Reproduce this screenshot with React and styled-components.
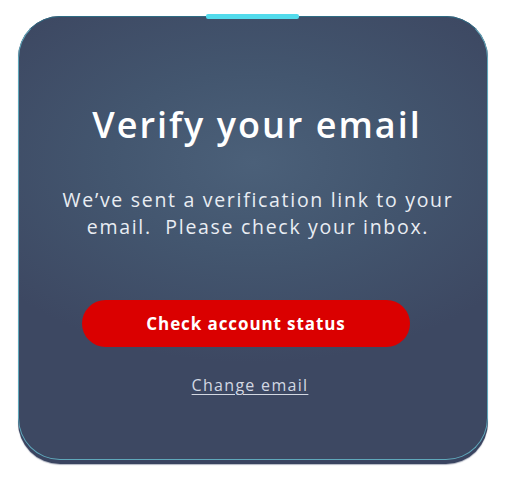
import React from 'react'
import styled, { createGlobalStyle } from 'styled-components'

const GlobalStyle = createGlobalStyle`
    body {
        margin: 0;
        background: #fff;
        font-family: "Open Sans", "Liberation Sans", sans-serif;
    }
`

export const Page = styled.div`
    width: 514px;
    height: 485px;
    padding: 16px 26px 0 18px;
    box-sizing: border-box;
`
export const Shell = styled.div`
    position: relative;
    height: 448px;
    border-radius: 42px;
    background: #3a4460;
    box-shadow: 0 1px 1px rgba(60, 70, 100, 0.4);
`
export const Card = styled.div`
    height: 444px;
    box-sizing: border-box;
    border-radius: 42px;
    border: 1px solid #5fa8bb;
    border-top-color: #2f6c84;
    background: radial-gradient(ellipse 320px 200px at 50% 33%, #4b6079 0%, #43566f 45%, #3d4862 100%);
    display: flex;
    flex-direction: column;
    align-items: center;
    padding-top: 83px;
`
export const Accent = styled.div`
    position: absolute;
    top: -2px;
    left: 188px;
    width: 93px;
    height: 5px;
    border-radius: 2px;
    background: #52dbec;
`
export const Title = styled.h1`
    margin: 0;
    font-size: 36px;
    font-weight: 600;
    color: #ffffff;
    letter-spacing: 2px;
    padding-left: 8px;
`
export const Message = styled.p`
    margin: 37px 0 0;
    font-size: 19.5px;
    line-height: 27px;
    letter-spacing: 1.7px;
    color: #e9edf3;
    text-align: center;
    white-space: pre;
    padding-left: 10px;
`
export const Button = styled.button`
    margin-top: 60px;
    margin-right: 14px;
    width: 328px;
    height: 47px;
    border: none;
    border-radius: 24px;
    background: #da0000;
    color: #fff;
    font-family: inherit;
    font-size: 17px;
    font-weight: 700;
    letter-spacing: 0.9px;
    cursor: pointer;
`
export const LinkText = styled.a`
    margin-top: 27px;
    margin-right: 6px;
    font-size: 16px;
    letter-spacing: 1.3px;
    color: #d3d8e2;
    text-decoration: underline;
    text-underline-offset: 3px;
    cursor: pointer;
`

export default function App() {
    return (
        <Page>
            <GlobalStyle />
            <Shell>
                <Accent />
                <Card>
                    <Title>Verify your email</Title>
                    <Message>{'We’ve sent a verification link to your\nemail.  Please check your inbox.'}</Message>
                    <Button>Check account status</Button>
                    <LinkText>Change email</LinkText>
                </Card>
            </Shell>
        </Page>
    )
}
